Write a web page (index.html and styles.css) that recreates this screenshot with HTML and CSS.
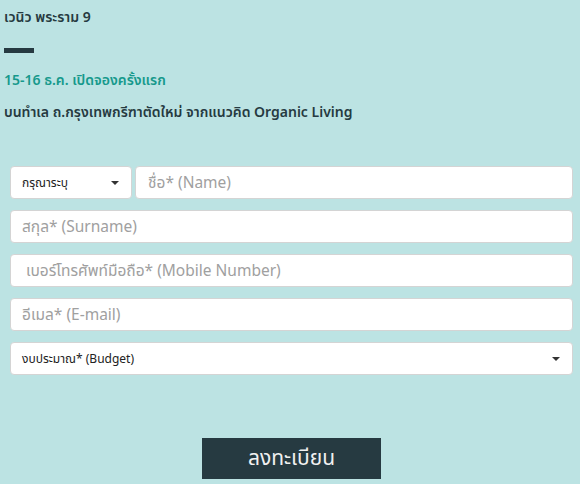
FILE: index.html
```html
<!DOCTYPE html>
<html lang="th">
<head>
    <meta charset="UTF-8">
    <meta name="viewport" content="width=device-width, initial-scale=1.0">
    <title>ลงทะเบียน</title>
    <link rel="stylesheet" href="styles.css">
</head>
<body>
    <div class="intro">
        <h2 class="project">เวนิว พระราม 9</h2>
        <div class="dash"></div>
        <p class="date">15-16 ธ.ค. เปิดจองครั้งแรก</p>
        <p class="desc">บนทำเล ถ.กรุงเทพกรีฑาตัดใหม่ จากแนวคิด Organic Living</p>
    </div>

    <form class="register">
        <div class="row">
            <div class="field select title">
                <span>กรุณาระบุ</span>
                <i class="caret"></i>
            </div>
            <div class="field hint grow">ชื่อ* (Name)</div>
        </div>
        <div class="field hint">สกุล* (Surname)</div>
        <div class="field hint mobile">เบอร์โทรศัพท์มือถือ* (Mobile Number)</div>
        <div class="field hint">อีเมล* (E-mail)</div>
        <div class="field select">
            <span>งบประมาณ* (Budget)</span>
            <i class="caret"></i>
        </div>
        <div class="actions">
            <button type="button">ลงทะเบียน</button>
        </div>
    </form>
</body>
</html>
```

FILE: styles.css
```css
body { margin: 0; background: #bce3e3; font-family: "Noto Sans", "Noto Sans Thai", sans-serif; color: #263a41; }
.intro { padding: 6px 4px 0; }
.project { font-size: 14px; font-weight: 600; margin: 0; line-height: 22px; }
.dash { width: 30px; height: 5px; background: #263a41; margin-top: 20px; }
.date { color: #16998c; font-size: 14px; font-weight: 600; margin: 16px 0 0; line-height: 22px; }
.desc { font-size: 14px; font-weight: 600; margin: 10px 0 0; line-height: 22px; }
.register { margin: 43px 7px 0 10px; display: flex; flex-direction: column; gap: 11px; }
.row { display: flex; gap: 3px; }
.grow { flex: 1; }
.field { box-sizing: border-box; height: 33px; background: #fff; border: 1px solid #d4d4d4; border-radius: 4px; padding: 0 11px; display: flex; align-items: center; font-size: 15.5px; }
.hint { color: #a0a0a0; }
.grow.hint { padding-left: 12px; }
.mobile { padding-left: 15px; }
.select { font-size: 12px; color: #222; justify-content: space-between; padding-right: 12px; }
.title { width: 122px; }
.caret { width: 0; height: 0; border-left: 4px solid transparent; border-right: 4px solid transparent; border-top: 4px solid #333; }
.actions { display: flex; justify-content: center; margin-top: 52px; }
button { width: 179px; height: 41px; border: 0; background: #263a41; color: #f0f0f0; font-family: inherit; font-size: 21px; }
```
